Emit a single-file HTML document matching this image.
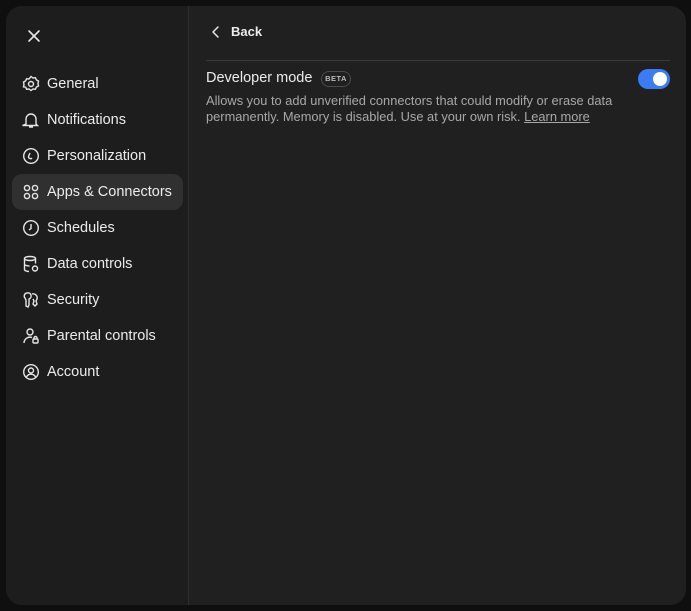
<!DOCTYPE html>
<html><head><style>
*{margin:0;padding:0;box-sizing:border-box}
body{width:691px;height:611px;background:#0f0f10;font-family:"Liberation Sans",sans-serif;overflow:hidden;position:relative}
.panel{position:absolute;left:6px;top:6px;width:680px;height:599px;background:#202020;border-radius:16px;overflow:hidden}
.side{position:absolute;left:0;top:0;width:183px;height:100%;background:#1d1d1d;border-right:1px solid #2e2e2e}
.x{position:absolute;left:20px;top:22px}
.item{position:absolute;left:6px;width:171px;height:36px;border-radius:10px;color:#ececec;font-size:14.5px}
.item.act{background:#303030}
.item svg{position:absolute;left:10px;top:9px}
.item span{position:absolute;left:35px;top:10px}
.back{position:absolute;left:231px;top:24px;color:#ececec;font-size:13px;font-weight:bold}
.hr{position:absolute;left:206px;top:60px;width:464px;height:1px;background:#3a3a3a}
.title{position:absolute;left:206px;top:70px;color:#ececec;font-size:14.5px}
.beta{position:absolute;left:321px;top:71px;width:30px;height:16px;border:1px solid #4a4a4a;border-radius:8px;color:#bbb;font-size:7.5px;font-weight:bold;text-align:center;line-height:14px;letter-spacing:.5px}
.desc{position:absolute;left:206px;top:93px;width:450px;color:#a8a8a8;font-size:12.85px;line-height:16px}
.desc u{color:#a8a8a8}
.tog{position:absolute;left:638px;top:69px;width:32px;height:20px;border-radius:10px;background:#3b7cf5}
.tog i{position:absolute;right:3px;top:3px;width:14px;height:14px;border-radius:50%;background:#fff}
</style></head><body>
<div class="panel">
<div class="side">
<svg class="x" width="16" height="16" viewBox="0 0 16 16"><path d="M3 3L13 13M13 3L3 13" stroke="#e6e6e6" stroke-width="1.6" stroke-linecap="round"/></svg>
<div class="item" style="top:60px"><svg width="18" height="18" viewBox="0 0 18 18" fill="none" stroke="#e6e6e6" stroke-width="1.4"><path d="M9 1.5l2 1.5 2.4-.3 1 2.2 2.1 1.2-.5 2.4.5 2.4-2.1 1.2-1 2.2-2.4-.3-2 1.5-2-1.5-2.4.3-1-2.2L1.5 11.9 2 9.5 1.5 7.1l2.1-1.2 1-2.2 2.4.3z"/><circle cx="9" cy="9" r="2.5"/></svg><span>General</span></div>
<div class="item" style="top:96px"><svg width="18" height="18" viewBox="0 0 18 18" fill="none" stroke="#e6e6e6" stroke-width="1.4"><path d="M4 13V8a5 5 0 0110 0v5l1.5 1.5h-15z M7 16h4"/></svg><span>Notifications</span></div>
<div class="item" style="top:132px"><svg width="18" height="18" viewBox="0 0 18 18" fill="none" stroke="#e6e6e6" stroke-width="1.4"><circle cx="9" cy="9" r="7.3"/><path d="M8 6l-1.5 3.5a2 2 0 003.5 1.5"/></svg><span>Personalization</span></div>
<div class="item act" style="top:168px"><svg width="18" height="18" viewBox="0 0 18 18" fill="none" stroke="#e6e6e6" stroke-width="1.4"><circle cx="5" cy="5" r="2.6"/><circle cx="13" cy="5" r="2.6"/><circle cx="5" cy="13" r="2.6"/><circle cx="13" cy="13" r="2.6"/></svg><span>Apps &amp; Connectors</span></div>
<div class="item" style="top:204px"><svg width="18" height="18" viewBox="0 0 18 18" fill="none" stroke="#e6e6e6" stroke-width="1.4"><circle cx="9" cy="9" r="7.3"/><path d="M9 5v4.5L7 11"/></svg><span>Schedules</span></div>
<div class="item" style="top:240px"><svg width="18" height="18" viewBox="0 0 18 18" fill="none" stroke="#e6e6e6" stroke-width="1.4"><ellipse cx="8" cy="3.5" rx="5.5" ry="2"/><path d="M2.5 3.5v11c0 1 2 2 4.5 2M13.5 3.5v5M2.5 9c0 1 2 2 5 2"/><circle cx="13" cy="13.5" r="2.5"/></svg><span>Data controls</span></div>
<div class="item" style="top:276px"><svg width="18" height="18" viewBox="0 0 18 18" fill="none" stroke="#e6e6e6" stroke-width="1.4"><path d="M5 2a3 3 0 00-2 5l1 2v6l2 1 1-2V8a3 3 0 00-2-6zM10 3a4 4 0 015 5l-1 2 1 3-2 2-2-2 1-3-1-2"/></svg><span>Security</span></div>
<div class="item" style="top:312px"><svg width="18" height="18" viewBox="0 0 18 18" fill="none" stroke="#e6e6e6" stroke-width="1.4"><circle cx="8" cy="5" r="3"/><path d="M2 16a6 6 0 018-5.5"/><rect x="11" y="12" width="5" height="4" rx="1"/><path d="M12 12v-1a1.5 1.5 0 013 0v1"/></svg><span>Parental controls</span></div>
<div class="item" style="top:348px"><svg width="18" height="18" viewBox="0 0 18 18" fill="none" stroke="#e6e6e6" stroke-width="1.4"><circle cx="9" cy="9" r="7.3"/><circle cx="9" cy="7.5" r="2.5"/><path d="M4.5 14a5 5 0 019 0"/></svg><span>Account</span></div>
</div>
</div>
<svg style="position:absolute;left:210px;top:25px" width="12" height="14" viewBox="0 0 12 14"><path d="M8 2L3 7l5 5" fill="none" stroke="#e6e6e6" stroke-width="1.5" stroke-linecap="round" stroke-linejoin="round"/></svg>
<div class="back">Back</div>
<div class="hr"></div>
<div class="title">Developer mode</div>
<div class="beta">BETA</div>
<div class="tog"><i></i></div>
<div class="desc">Allows you to add unverified connectors that could modify or erase data permanently. Memory is disabled. Use at your own risk. <u>Learn more</u></div>
</body></html>
